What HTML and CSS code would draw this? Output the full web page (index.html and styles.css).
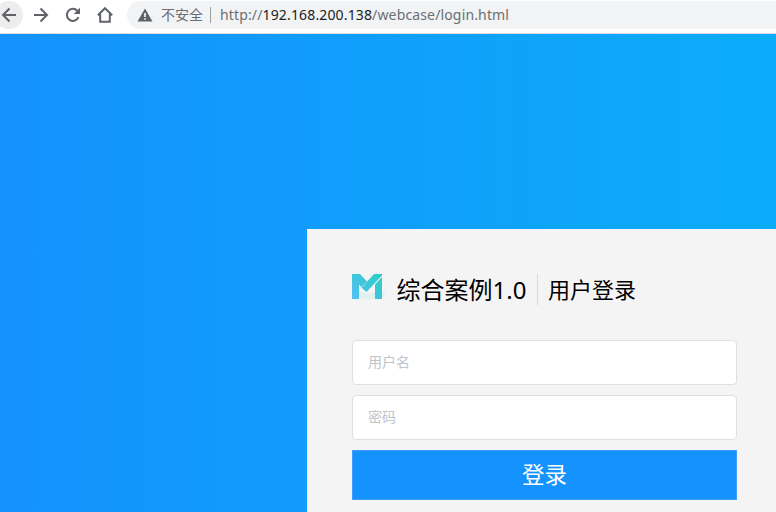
FILE: index.html
```
<!DOCTYPE html>
<html lang="zh-CN">
<head>
<meta charset="utf-8">
<title>用户登录</title>
<link rel="stylesheet" href="styles.css">
</head>
<body>
<header class="toolbar">
  <nav class="nav">
    <span class="nav-btn active"><svg width="16" height="16" viewBox="0 0 16 16"><path d="M15 8H2.500M8.500 1.500L2 8l6.500 6.500"/></svg></span>
    <span class="nav-btn"><svg width="16" height="16" viewBox="0 0 16 16"><path d="M1 8h12.500M7.500 1.500L14 8l-6.500 6.500"/></svg></span>
    <span class="nav-btn"><svg width="16" height="16" viewBox="0 0 16 16"><path d="M13.500 10A6 6 0 1 1 12.300 3.800L13.500 5"/><path class="solid" d="M15 .8V7H8.800z"/></svg></span>
    <span class="nav-btn"><svg width="16" height="16" viewBox="0 0 16 16"><path d="M.8 8.200L8 1.200l7.200 7M3.200 7v7.700h9.600V7"/></svg></span>
  </nav>
  <div class="address">
    <svg class="warning" width="16" height="14" viewBox="0 0 16 14"><path d="M8 .5L15.500 13.500H.5z"/><path class="mark" d="M7.200 5h1.600v4H7.200zM7.200 10.200h1.600v1.600H7.200z"/></svg>
    <span class="unsafe">不安全</span>
    <span class="url">http://<b>192.168.200.138</b>/webcase/login.html</span>
  </div>
</header>
<main class="page">
  <form class="card">
    <div class="heading">
      <svg class="logo" width="36" height="30" viewBox="0 0 36 30">
        <defs><linearGradient id="g" gradientUnits="userSpaceOnUse" x1="26" y1="2" x2="2" y2="25"><stop offset="0" stop-color="#2fccc8"/><stop offset="1" stop-color="#52c0f3"/></linearGradient></defs>
        <path fill="#dff0f1" d="M7 18l6 1 4 1 6-2 11 0-2 4-4 3-13 0-8-1z"/>
        <path fill="url(#g)" d="M0 0h8l7 7.500-5.500 5.500L7 10.500V25H0z"/>
        <path fill="url(#g)" d="M22 0h8v1.500L14.500 18l-5-4.300z"/>
        <path fill="url(#g)" d="M30 3v22h-7V10.500z"/>
      </svg>
      <span class="brand">综合案例1.0</span>
      <span class="title">用户登录</span>
    </div>
    <input class="field" type="text" placeholder="用户名">
    <input class="field" type="password" placeholder="密码">
    <button class="submit" type="button">登录</button>
  </form>
</main>
</body>
</html>
```
FILE: styles.css
```
* { box-sizing: border-box; }
body {
  margin: 0;
  height: 512px;
  overflow: hidden;
  display: flex;
  flex-direction: column;
  font-family: "Noto Sans", "Noto Sans CJK SC", sans-serif;
}
.toolbar {
  flex: none;
  height: 34px;
  display: flex;
  align-items: flex-start;
  padding-top: 1px;
  background: #fff;
  border-bottom: 1px solid #dadce0;
}
.nav { display: flex; gap: 4px; margin-left: -5px; width: 132px; flex: none; }
.nav-btn {
  width: 28px;
  height: 28px;
  border-radius: 50%;
  display: flex;
  align-items: center;
  justify-content: center;
}
.active { background: #ededed; }
.nav svg { fill: none; stroke: #5f6368; stroke-width: 2; }
.nav .solid { fill: #5f6368; stroke: none; }
.address {
  flex: 1;
  height: 28px;
  display: flex;
  align-items: center;
  padding-left: 10px;
  background: #f1f3f4;
  border-radius: 14px 0 0 14px;
  color: #6b6f73;
  font-size: 14px;
  line-height: 20px;
  white-space: nowrap;
}
.warning { fill: #5f6368; margin-right: 8px; }
.warning .mark { fill: #fff; }
.unsafe { width: 50px; height: 16px; line-height: 16px; border-right: 1px solid #9b9fa3; }
.url { margin-left: 9px; letter-spacing: .145px; }
.url b { color: #202124; font-weight: 400; }
.page {
  flex: 1;
  background: linear-gradient(90deg, #1492fd, #0cacfa);
  padding: 195px 0 0 307px;
}
.card {
  height: 283px;
  padding: 45px 39px 0 45px;
  background: #f4f4f4;
  display: flex;
  flex-direction: column;
  gap: 10px;
}
.heading {
  height: 31px;
  margin-bottom: 25px;
  display: flex;
  color: #000;
  line-height: 31px;
  white-space: nowrap;
}
.logo { flex: none; margin-right: 8.500px; }
.brand { width: 141.500px; font-size: 24px; border-right: 1px solid #d9d9d9; }
.title { margin-left: 10px; font-size: 22px; }
.field {
  flex: none;
  width: 385px;
  height: 45px;
  padding: 0 15px 2px;
  border: 1px solid #dcdfe6;
  border-radius: 4px;
  background: #fff;
  font: 14px "Noto Sans", "Noto Sans CJK SC", sans-serif;
}
.field::placeholder { color: #c0c4cc; opacity: 1; }
.submit {
  flex: none;
  width: 385px;
  height: 50px;
  padding: 0 0 3px;
  border: 1px solid #409eff;
  background: #1492fd;
  color: #fff;
  font: 22.5px "Noto Sans", "Noto Sans CJK SC", sans-serif;
}
```
